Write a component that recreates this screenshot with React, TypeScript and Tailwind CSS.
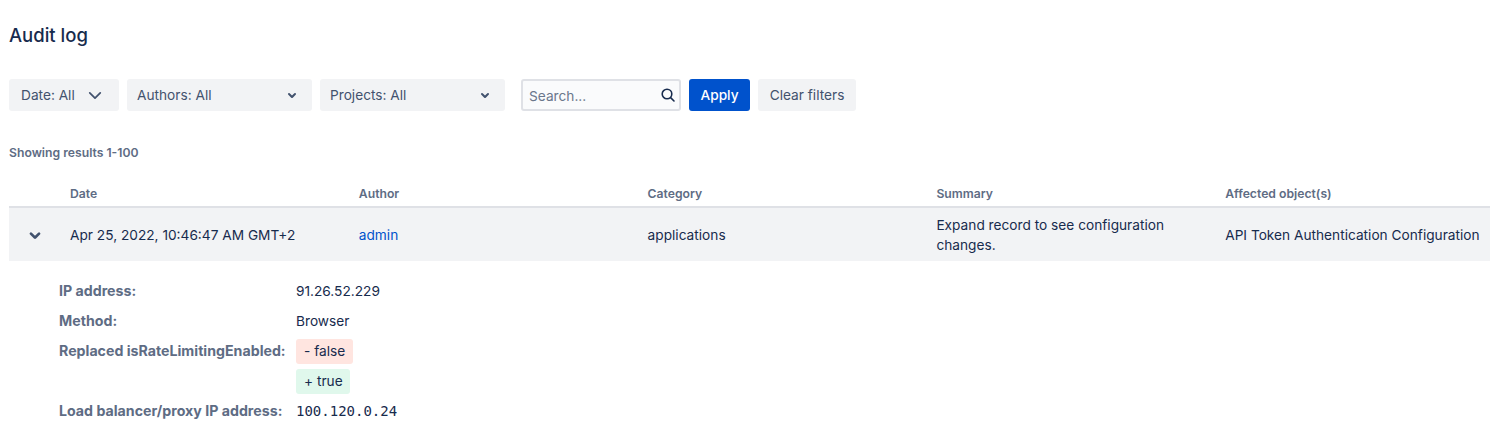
import React from "react";

const Chevron = ({ className = "" }: { className?: string }) => (
  <svg viewBox="0 0 24 24" className={className} fill="currentColor">
    <path d="M8.292 10.293a1.009 1.009 0 0 0 0 1.419l2.939 2.965c.218.215.5.322.779.322s.556-.107.769-.322l2.93-2.955a1.01 1.01 0 0 0 0-1.419.987.987 0 0 0-1.406 0l-2.298 2.317-2.307-2.327a.99.99 0 0 0-1.406 0z" />
  </svg>
);

const ThinChevron = () => (
  <svg viewBox="0 0 16 10" className="w-[14px] h-[9px] text-[#42526e]" fill="none" stroke="currentColor" strokeWidth="2" strokeLinecap="round" strokeLinejoin="round">
    <path d="M2 2 L8 8 L14 2" />
  </svg>
);

const Search = () => (
  <svg viewBox="0 0 16 16" className="w-4 h-4 text-[#172b4d]" fill="none" stroke="currentColor" strokeWidth="1.6">
    <circle cx="7" cy="7" r="4.8" />
    <path d="M10.6 10.6 L14 14" strokeLinecap="round" />
  </svg>
);

const Filter = ({ label, w, big }: { label: string; w: string; big?: boolean }) => (
  <button className={`${w} h-8 rounded-[3px] bg-[#f2f3f5] flex items-center justify-between text-[#42526e] text-[13.7px] ${big ? "pl-3 pr-[17px]" : "pl-[10px] pr-[8px]"}`}>
    <span>{label}</span>
    {big ? <ThinChevron /> : <Chevron className="w-6 h-6" />}
  </button>
);

const Th = ({ children }: { children: React.ReactNode }) => (
  <div className="w-[288.8px] shrink-0 text-[12.2px] font-semibold text-[#5e6c84]">{children}</div>
);

const Detail = ({ label, children }: { label: string; children: React.ReactNode }) => (
  <div className="flex items-start gap-[10px]">
    <div className="w-[227px] shrink-0 h-[30px] flex items-center text-[14.2px] font-bold text-[#5e6c84] whitespace-nowrap">{label}</div>
    <div className="flex flex-col items-start text-[13.7px] text-[#172b4d]">{children}</div>
  </div>
);

const Value = ({ children, cls = "" }: { children: React.ReactNode; cls?: string }) => (
  <div className={`h-[30px] flex items-center ${cls}`}>{children}</div>
);

export default function App() {
  return (
    <div className="w-[1490px] h-[426px] overflow-hidden bg-white pl-[9px] font-['Inter',sans-serif] text-[#172b4d]">
      <h1 className="pt-[24px] h-[79px] text-[18.5px] leading-[22px] font-medium text-[#172b4d]">Audit log</h1>

      <div className="flex items-center gap-2 h-8">
        <Filter label="Date: All" w="w-[110px]" big />
        <Filter label="Authors: All" w="w-[185px]" />
        <Filter label="Projects: All" w="w-[185px]" />
        <div className="ml-2 w-[160px] h-8 rounded-[3px] border-2 border-[#dfe1e6] bg-[#fafbfc] flex items-center justify-between pl-[6px] pr-[3px] text-[13.7px] text-[#6b778c]">
          <span className="pt-[2px]">Search...</span>
          <Search />
        </div>
        <button className="w-[61px] h-8 rounded-[3px] bg-[#0052cc] text-white text-[13.7px] font-medium">Apply</button>
        <button className="w-[98px] h-8 rounded-[3px] bg-[#f2f3f5] text-[#42526e] text-[13.7px]">Clear filters</button>
      </div>

      <div className="mt-[34px] text-[12.2px] leading-[16px] font-semibold text-[#5e6c84]">Showing results 1-100</div>

      <div className="mt-[24px] flex h-[21px] pl-[61px] border-b-2 border-[#dfe1e6] box-content items-start">
        <Th>Date</Th>
        <Th>Author</Th>
        <Th>Category</Th>
        <Th>Summary</Th>
        <Th>Affected object(s)</Th>
      </div>

      <div className="flex items-center h-[53px] bg-[#f2f3f5] text-[13.7px] text-[#172b4d]">
        <div className="w-[61px] shrink-0 flex pl-[14px] text-[#42526e]">
          <Chevron className="w-6 h-6 scale-[1.35]" />
        </div>
        <div className="w-[288.8px] shrink-0 pt-[2px]">Apr 25, 2022, 10:46:47 AM GMT+2</div>
        <div className="w-[288.8px] shrink-0 pt-[2px] text-[#0052cc]">admin</div>
        <div className="w-[288.8px] shrink-0 pt-[2px]">applications</div>
        <div className="w-[288.8px] shrink-0 pr-[40px] leading-5">Expand record to see configuration changes.</div>
        <div className="whitespace-nowrap pt-[2px]">API Token Authentication Configuration</div>
      </div>

      <div className="pl-[50px] pt-[15px]">
        <Detail label="IP address:"><Value>91.26.52.229</Value></Detail>
        <Detail label="Method:"><Value>Browser</Value></Detail>
        <Detail label="Replaced isRateLimitingEnabled:">
          <Value><span className="h-[25px] px-2 rounded-[3px] bg-[#ffe5e0] flex items-center">- false</span></Value>
          <Value><span className="h-[25px] pl-2 pr-[7px] rounded-[3px] bg-[#e0f8ec] flex items-center">+ true</span></Value>
        </Detail>
        <Detail label="Load balancer/proxy IP address:">
          <Value cls="font-['DejaVu_Sans_Mono',monospace] text-[14px]">100.120.0.24</Value>
        </Detail>
      </div>
    </div>
  );
}
